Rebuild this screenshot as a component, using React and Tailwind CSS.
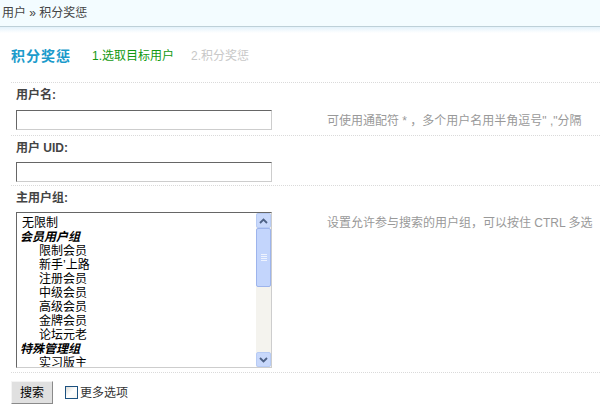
import React from 'react';

const font = "font-['Liberation_Sans','Noto_Sans_CJK_SC',sans-serif]";

const options = [
  { label: '无限制', type: 'opt' },
  { label: '会员用户组', type: 'group' },
  { label: '限制会员', type: 'sub' },
  { label: '新手’上路', type: 'sub' },
  { label: '注册会员', type: 'sub' },
  { label: '中级会员', type: 'sub' },
  { label: '高级会员', type: 'sub' },
  { label: '金牌会员', type: 'sub' },
  { label: '论坛元老', type: 'sub' },
  { label: '特殊管理组', type: 'group' },
  { label: '实习版主', type: 'sub' },
];

const ArrowBtn = ({ up }) => (
  <div className="h-[15px] w-full rounded-[2px] border border-[#b7cbf4] bg-[#c8d8fb] flex items-center justify-center">
    <svg width="9" height="6" viewBox="0 0 9 6">
      <path d={up ? 'M1 5 L4.5 1.5 L8 5' : 'M1 1 L4.5 4.5 L8 1'} stroke="#4d6185" strokeWidth="1.8" fill="none" />
    </svg>
  </div>
);

const Scrollbar = () => (
  <div className="w-[16px] h-full flex flex-col bg-[#f4f3ee] border-l border-white">
    <ArrowBtn up />
    <div className="h-[59px] w-full rounded-[2px] border border-[#9db4ec] bg-[#c3d5fc] flex flex-col items-center justify-center gap-[1px]">
      {[0, 1, 2, 3].map(i => <div key={i} className="w-[6px] h-[1px] bg-[#eef3fe]" />)}
    </div>
    <div className="flex-1" />
    <ArrowBtn />
  </div>
);

const inputCls = 'w-[256px] h-[20px] border border-t-[#666] border-l-[#666] border-r-[#cdcdcd] border-b-[#cdcdcd] bg-white';

export default function App() {
  return (
    <div className={`w-[600px] h-[409px] bg-white overflow-hidden text-[12px] leading-[14px] text-[#333] ${font}`}>
      <div className="h-[27px] bg-[#f3fcff] border-b border-[#bdd0d8] flex items-center pl-[2px] text-[#444]">
        用户 » 积分奖惩
      </div>
      <div className="h-[6px] bg-gradient-to-b from-[#e3f2fb] to-white" />

      <div className="h-[49px] pb-[3px] pl-[11px] flex items-center">
        <span className="text-[14px] font-bold text-[#1b9bcb] tracking-[1px]">积分奖惩</span>
        <span className="ml-[21px] text-[#119911]">1.选取目标用户</span>
        <span className="ml-[17px] text-[#c8c8c8]">2.积分奖惩</span>
      </div>

      <div className="ml-[11px]">
        <div className="border-t border-dotted border-[#dadada]">
          <div className="h-[24px] pl-[5px] flex items-center font-bold text-[#444]">用户名:</div>
          <div className="flex items-start pb-[5px]">
            <div className="w-[316px] pl-[5px] pt-[3px]">
              <div className={inputCls} />
            </div>
            <div className="mt-[7px] text-[#999]">可使用通配符 * ，多个用户名用半角逗号" ,"分隔</div>
          </div>
        </div>

        <div className="border-t border-dotted border-[#dadada]">
          <div className="h-[24px] pl-[5px] flex items-center font-bold text-[#444]">用户 UID:</div>
          <div className="flex items-start pb-[3px]">
            <div className="w-[316px] pl-[5px] pt-[2px]">
              <div className={inputCls} />
            </div>
          </div>
        </div>

        <div className="border-t border-dotted border-[#dadada]">
          <div className="h-[24px] pl-[5px] flex items-center font-bold text-[#444]">主用户组:</div>
          <div className="flex items-start pb-[4px]">
            <div className="w-[316px] pl-[5px] pt-[2px]">
              <div className="w-[256px] h-[156px] border border-t-[#666] border-l-[#666] border-r-[#cdcdcd] border-b-[#cdcdcd] bg-white flex">
                <div className="flex-1 overflow-hidden pt-[3px] text-black">
                  {options.map((o, i) => (
                    <div
                      key={i}
                      className={
                        o.type === 'group'
                          ? 'h-[14px] pl-[3px] font-bold italic'
                          : o.type === 'sub'
                          ? 'h-[14px] pl-[22px]'
                          : 'h-[14px] pl-[5px]'
                      }
                    >
                      {o.label}
                    </div>
                  ))}
                </div>
                <Scrollbar />
              </div>
            </div>
            <div className="mt-[6px] text-[#999]">设置允许参与搜索的用户组，可以按住 CTRL 多选</div>
          </div>
        </div>

        <div className="border-t border-dotted border-[#dadada] pt-[8px] flex items-center">
          <button className="w-[42px] h-[23px] bg-[#e0e0e0] border border-t-[#f4f4f4] border-l-[#f4f4f4] border-r-[#8a8a8a] border-b-[#8a8a8a] text-black text-[12px] leading-[14px]">
            搜索
          </button>
          <div className="ml-[12px] flex items-center gap-[2px]">
            <div className="w-[13px] h-[13px] border border-[#1c5180] bg-gradient-to-br from-[#dcdcd7] via-white to-[#f4f4f0]" />
            <span className="text-[#333]">更多选项</span>
          </div>
        </div>
      </div>
    </div>
  );
}
